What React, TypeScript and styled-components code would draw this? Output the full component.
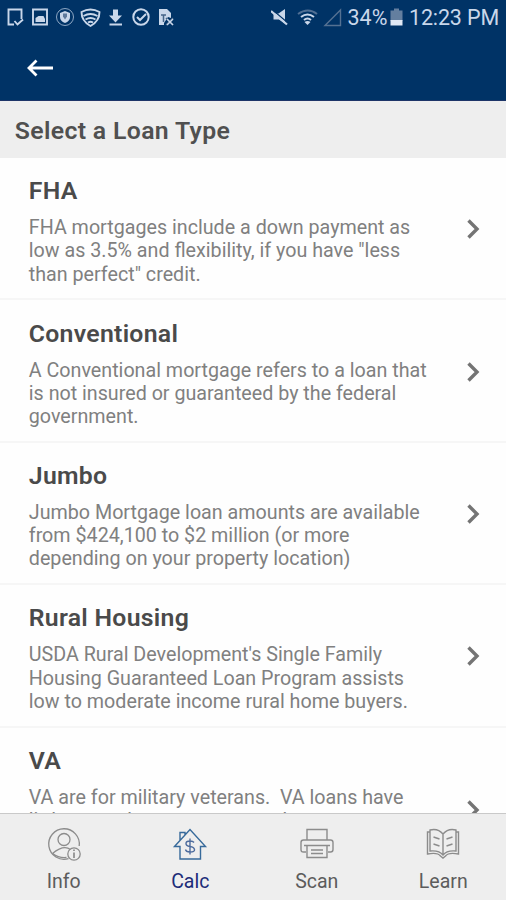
import React from 'react';
import styled, { createGlobalStyle } from 'styled-components';

const GlobalStyle = createGlobalStyle`
  * { box-sizing: border-box; }
  body { margin: 0; font-family: Roboto, sans-serif; background: #fff; }
`;

const Screen = styled.div`
  display: flex;
  flex-direction: column;
  width: 506px;
  height: 900px;
  overflow: hidden;
  background: #fefefe;
`;

const Header = styled.header`
  height: 101px;
  flex: none;
  background: #003366;
  border-bottom: 1px solid #1d3568;
`;

const StatusBar = styled.div`
  display: flex;
  justify-content: space-between;
  height: 35px;
  padding: 0 7px 0 4px;
  color: #c9d7ea;
`;

const StatusInfo = styled.div`
  display: flex;
  align-items: center;
  font-size: 21.5px;
  white-space: nowrap;
`;

const Percent = styled.span`
  width: 42px;
  margin-left: 3px;
`;

const Clock = styled.span`
  width: 90px;
  margin-left: 6.5px;
  letter-spacing: -0.15px;
`;

const AppBar = styled.div`
  display: flex;
  align-items: center;
  height: 65px;
  padding-left: 26px;
`;

const BackButton = styled.button`
  display: flex;
  padding: 0;
  border: 0;
  background: none;
  color: #fff;
`;

const SectionTitle = styled.h1`
  flex: none;
  height: 57px;
  margin: 0;
  padding: 0 14.8px;
  background: #eeeeee;
  color: #505050;
  font-size: 24.8px;
  font-weight: 600;
  letter-spacing: 0.34px;
  line-height: 60px;
`;

const List = styled.main`
  flex: 1;
  min-height: 0;
  overflow: hidden;
`;

const Row = styled.section`
  display: flex;
  align-items: center;
  justify-content: space-between;
  padding: 18.2px 25px 12.6px 28.8px;
  border-bottom: 2px solid #f6f6f6;

  > svg { margin-bottom: 3.6px; }
`;

const RowTitle = styled.h2`
  margin: 0 0 11px;
  color: #4a4a4a;
  font-size: 24.8px;
  font-weight: 600;
  letter-spacing: 0.28px;
  line-height: 29px;
`;

const Description = styled.p<{ $lines: number }>`
  min-height: ${({ $lines }) => $lines * 23.2}px;
  margin: 0;
  color: #808080;
  font-size: 19.7px;
  line-height: 23.2px;
  white-space: pre;
`;

const TabBar = styled.nav`
  display: flex;
  flex: none;
  height: 87px;
  border-top: 1.5px solid #c9c9c9;
  background: #eeeeee;
`;

const Tab = styled.div<{ $active?: boolean }>`
  display: flex;
  flex: 1;
  flex-direction: column;
  align-items: center;
  padding: 13px 0 0 1px;
  color: ${({ $active }) => ($active ? '#1c2c78' : '#5c5c5c')};
  font-size: 19.5px;
  line-height: 24px;

  svg { color: ${({ $active }) => ($active ? '#376a9b' : '#8c8c8c')}; }
`;

const TabLabel = styled.span`
  margin-top: 7px;
`;

const loans = [
  { title: 'FHA', lines: 3, text: 'FHA mortgages include a down payment as\nlow as 3.5% and flexibility, if you have "less\nthan perfect" credit.' },
  { title: 'Conventional', lines: 3, text: 'A Conventional mortgage refers to a loan that\nis not insured or guaranteed by the federal\ngovernment.' },
  { title: 'Jumbo', lines: 3, text: 'Jumbo Mortgage loan amounts are available\nfrom $424,100 to $2 million (or more\ndepending on your property location)' },
  { title: 'Rural Housing', lines: 3, text: "USDA Rural Development's Single Family\nHousing Guaranteed Loan Program assists\nlow to moderate income rural home buyers." },
  { title: 'VA', lines: 4, text: 'VA are for military veterans.  VA loans have\nlittle to no down payment and' },
];

const NotificationIcons = () => (
  <svg width="176" height="35" fill="none" stroke="currentColor" strokeWidth="1.9">
    <path d="M10 24.500H4.500V9.500H17.500V19M10.500 21l3 3.500 5.500-5" />
    <path d="M29 9.500h14v15H29z" />
    <path d="M31.500 22v-4l3-2h5l1.500 3v3z" fill="currentColor" stroke="none" />
    <circle cx="61" cy="17" r="8.500" strokeWidth="1" opacity=".7" />
    <path d="M61 11l5 2v4q0 4-5 6-5-2-5-6v-4z" fill="currentColor" stroke="none" />
    <path d="M59 13.500h4v3l-2 3-2-3z" fill="#5f7a9c" stroke="none" />
    <path d="M77.500 12q9-5 18 0 0 9-9 14-9-5-9-14zM79.500 16q7-4 14 0M81.500 19.500q5-3 10 0M84 22.500q2.500-1.500 5 0" strokeWidth="1.900" />
    <path d="M109 9.500h5v6h4l-6.500 7-6.500-7h4z" fill="currentColor" stroke="none" />
    <path d="M105.500 24.500H118" strokeWidth="2" />
    <circle cx="137" cy="17" r="7.700" strokeWidth="2" />
    <path d="M133 17l3 3 6-6" strokeWidth="2" />
    <path d="M155 9h8l4 4v5l-3-1-4 6v2h-5z" fill="currentColor" stroke="none" />
    <path d="M157 15h5m-2.500 0v7M162 18l7 7m0-7-7 7" stroke="#456488" strokeWidth="1.500" />
    <path d="M163 19l6 6m0-6-6 6" strokeWidth="1.500" />
  </svg>
);

const SignalIcons = () => (
  <svg width="74" height="35" fill="none" stroke="currentColor">
    <path d="M2.500 13.500h5L14 9v14.500l-6-4H2.500z" fill="currentColor" stroke="none" />
    <path d="M1 9.500l16 13.500" stroke="#003366" strokeWidth="1.200" />
    <path d="M0 11l16 13.500" strokeWidth="2.200" />
    <path d="M27 14q10-7 19 0" strokeWidth="2" stroke="#506f94" />
    <path d="M30 17q6.500-5 13 0M33 20q3.500-3 7 0" strokeWidth="2" />
    <path d="M33.500 22q3-2 6 0l-3 3z" fill="currentColor" stroke="none" />
    <path d="M54 25.500L69.500 10v15.500z" stroke="#547192" strokeWidth="1.400" />
  </svg>
);

const Battery = () => (
  <svg width="13" height="35">
    <path d="M4 8.500h5v2h3.500V21H.5V10.500H4z" fill="#647f9f" />
    <path d="M.5 20h12v5.500H.5z" fill="#e0e8f4" />
  </svg>
);

const Chevron = () => (
  <svg width="14" height="24" fill="none" stroke="#747474" strokeWidth="3.400">
    <path d="M1.500 3.500l8.500 8.500-8.500 8.500" />
  </svg>
);

const InfoIcon = () => (
  <svg width="36" height="36" fill="none" stroke="currentColor" strokeWidth="1.300">
    <path d="M22.500 31.700A15.300 15.300 0 1 1 33.200 19" />
    <circle cx="18" cy="12.500" r="6" />
    <path d="M6.500 26.500q11-9 18-4M6.500 26.500q7 5 14 4" />
    <circle cx="28" cy="27" r="6.200" />
    <path d="M28 25.500V31M28 22.500v1.500" strokeWidth="1.700" />
  </svg>
);

const HouseIcon = () => (
  <svg width="36" height="36" fill="none" stroke="currentColor" strokeWidth="1.400">
    <path d="M2.500 19.500L18 2.500l15.500 17H28.500v12.500H8V19.500zM8 13V5.500h5V8" />
    <path d="M22 15.500q-1-1.500-4-1.500-4 0-4 2.500t4 3 4.500 3-4.500 2.500q-4 0-4.500-2.500M18 11.500v16" stroke="#4d6c9e" />
  </svg>
);

const PrinterIcon = () => (
  <svg width="36" height="36" fill="none" stroke="currentColor" strokeWidth="1.400">
    <path d="M8 13V2.500h20V13M7 25H4.500Q2 25 2 22.500v-7Q2 13 4.500 13h27q2.500 0 2.500 2.500v7q0 2.500-2.500 2.500H29M8 18.500h20v12H8zM5 18.500h26M12 23h12M12 26.500h12" />
  </svg>
);

const BookIcon = () => (
  <svg width="36" height="36" fill="none" stroke="currentColor" strokeWidth="1.400">
    <path d="M18 7q-5-6-13-4v21q9-1 13 4 4-5 13-4V3q-8-2-13 4v21M5 5H2.500v22q10-2 13 2l2.500 2 2.500-2q3-4 13-2V5H31" />
    <path d="M8.500 10l6 2M8.500 17l6 2M27.500 10l-6 2M27.500 17l-6 2" />
  </svg>
);

const tabs = [
  { label: 'Info', Icon: InfoIcon },
  { label: 'Calc', Icon: HouseIcon },
  { label: 'Scan', Icon: PrinterIcon },
  { label: 'Learn', Icon: BookIcon },
];

export default function App() {
  return (
    <Screen>
      <GlobalStyle />
      <Header>
        <StatusBar>
          <NotificationIcons />
          <StatusInfo>
            <SignalIcons />
            <Percent>34%</Percent>
            <Battery />
            <Clock>12:23 PM</Clock>
          </StatusInfo>
        </StatusBar>
        <AppBar>
          <BackButton aria-label="Back">
            <svg width="28" height="20" fill="none" stroke="currentColor" strokeWidth="2.800">
              <path d="M27 10H3M10.500 2.500L3 10l7.500 7.500" />
            </svg>
          </BackButton>
        </AppBar>
      </Header>
      <SectionTitle>Select a Loan Type</SectionTitle>
      <List>
        {loans.map(({ title, lines, text }) => (
          <Row key={title}>
            <div>
              <RowTitle>{title}</RowTitle>
              <Description $lines={lines}>{text}</Description>
            </div>
            <Chevron />
          </Row>
        ))}
      </List>
      <TabBar>
        {tabs.map(({ label, Icon }) => (
          <Tab key={label} $active={label === 'Calc'}>
            <Icon />
            <TabLabel>{label}</TabLabel>
          </Tab>
        ))}
      </TabBar>
    </Screen>
  );
}
